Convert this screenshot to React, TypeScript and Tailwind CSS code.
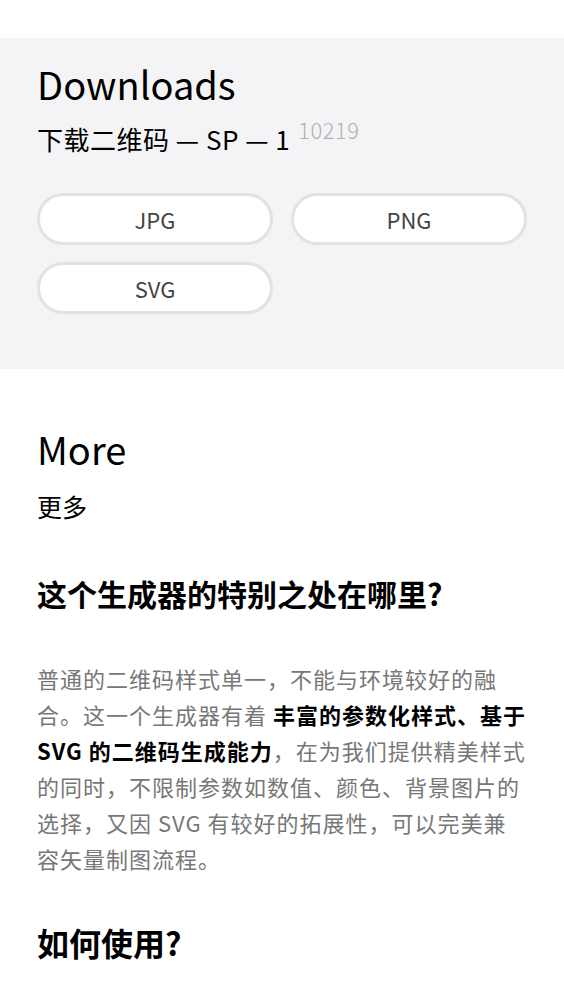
import React from 'react';

const font = { fontFamily: '"Noto Sans CJK SC", "Noto Sans", sans-serif' };

function FormatButton({ label }: { label: string }) {
  return (
    <button className="h-[52px] rounded-full border-[3px] border-[#e2e2e2] bg-white text-[22px] text-[#444] leading-none">
      {label}
    </button>
  );
}

export default function App() {
  return (
    <div className="min-h-[1002px] bg-white text-black" style={font}>
      <div className="h-[38px]" />
      <section className="bg-[#f4f4f6] px-[37px] pt-[20px] pb-[55px]">
        <h2 className="text-[38px] leading-[52px] font-normal">Downloads</h2>
        <p className="mt-[12px] text-[26px] leading-[34px] tracking-[0.5px]">
          下载二维码 — SP — 1
          <sup className="ml-[8px] text-[22px] text-[#b0b0b0] font-light">10219</sup>
        </p>
        <div className="mt-[37px] grid grid-cols-2 gap-x-[18px] gap-y-[17px]">
          <FormatButton label="JPG" />
          <FormatButton label="PNG" />
          <FormatButton label="SVG" />
        </div>
      </section>

      <section className="px-[37px] pt-[54px]">
        <h2 className="text-[38px] leading-[52px] font-normal">More</h2>
        <p className="mt-[14px] text-[25px] leading-[34px]">更多</p>

        <h3 className="mt-[48px] text-[30px] leading-[44px] font-bold">这个生成器的特别之处在哪里?</h3>
        <p className="mt-[45px] text-[22px] leading-[36px] tracking-[1px] text-[#777]">
          普通的二维码样式单一，不能与环境较好的融合。这一个生成器有着{' '}
          <strong className="font-bold text-black">丰富的参数化样式、基于 SVG 的二维码生成能力</strong>，在为我们提供精美样式的同时，不限制参数如数值、颜色、背景图片的选择，又因 SVG 有较好的拓展性，可以完美兼容矢量制图流程。
        </p>

        <h3 className="mt-[44px] text-[32px] leading-[44px] font-bold">如何使用?</h3>
      </section>
    </div>
  );
}
